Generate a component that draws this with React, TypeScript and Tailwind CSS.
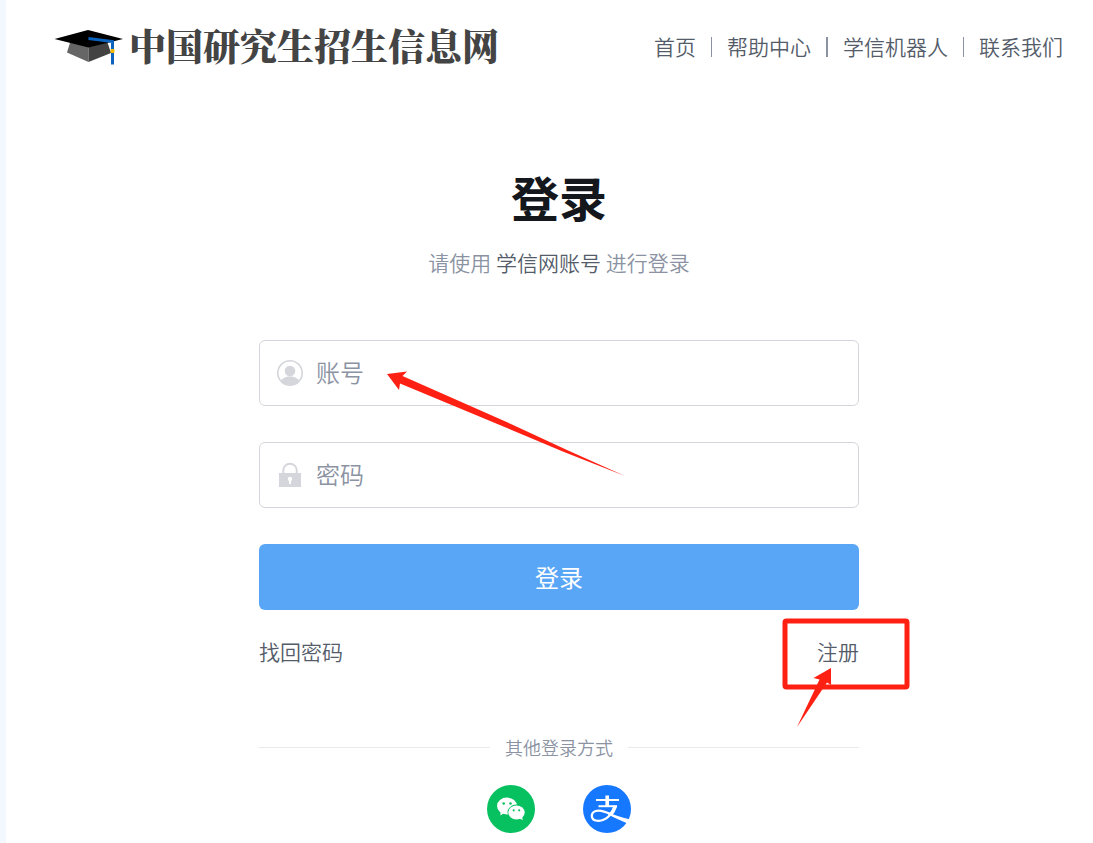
import React from 'react'

interface NavItem {
  label: string
  href: string
  divider?: string
}

const navItems: NavItem[] = [
  { label: '首页', href: '#home' },
  { label: '帮助中心', href: '#help', divider: 'w-px' },
  { label: '学信机器人', href: '#robot', divider: 'w-0.5' },
  { label: '联系我们', href: '#contact', divider: 'w-px' },
]

const CapLogo = () => (
  <svg viewBox="0 0 70 36" className="h-9 w-[70px] shrink-0" aria-hidden="true">
    <path d="M16.500 12 13 23.500 34.500 33V17Z" fill="#666" />
    <path d="M34.500 17V33L57 24 53 12Z" fill="#424242" />
    <path d="M0.500 10 34 1 69 10 34.500 18.500Z" fill="#000" />
    <path d="M34.500 9.500 58.500 12.500V35.500" fill="none" stroke="#0b63be" strokeWidth="3" />
    <rect x="56.500" y="20" width="4" height="4" rx="1" fill="#f5b800" />
  </svg>
)

const UserIcon = () => (
  <svg viewBox="0 0 26 26" className="size-[26px] shrink-0" aria-hidden="true">
    <defs>
      <clipPath id="user-clip">
        <circle cx="13" cy="13" r="12" />
      </clipPath>
    </defs>
    <circle cx="13" cy="13" r="12.200" fill="none" stroke="#d5d6db" strokeWidth="1.600" />
    <g clipPath="url(#user-clip)" fill="#d5d6db">
      <circle cx="13" cy="11" r="5.300" />
      <path d="M3.500 21.500c2-3.500 4.500-4.500 7.500-5h4c3 .5 5.500 1.500 7.500 5v5h-19Z" />
    </g>
  </svg>
)

const LockIcon = () => (
  <svg viewBox="0 0 26 26" className="size-[26px] shrink-0" aria-hidden="true">
    <path d="M6.300 12V8a6.700 6.200 0 0 1 13.400 0V12" fill="none" stroke="#d5d6db" strokeWidth="1.900" />
    <rect x="2" y="11" width="22" height="14" fill="#d5d6db" />
    <circle cx="13" cy="17" r="2.200" fill="#fff" />
    <rect x="12" y="17" width="2" height="5" fill="#fff" />
  </svg>
)

const WechatIcon = () => (
  <svg viewBox="0 0 48 48" className="size-12" aria-hidden="true">
    <circle cx="24" cy="24" r="24" fill="#07c160" />
    <path d="M13.500 24 13.500 30.500 18.500 27Z" fill="#fff" />
    <ellipse cx="20" cy="21" rx="10" ry="8.400" fill="#fff" />
    <ellipse cx="29.500" cy="27.500" rx="9" ry="7.900" fill="#07c160" />
    <ellipse cx="29.500" cy="27.500" rx="8.200" ry="7.100" fill="#fff" />
    <path d="M31 33 35.800 35 34.800 31Z" fill="#fff" />
    <g fill="#07c160">
      <circle cx="16.700" cy="18.500" r="1.300" />
      <circle cx="23.500" cy="18.500" r="1.300" />
      <circle cx="26.700" cy="25.300" r="1.100" />
      <circle cx="32.200" cy="25.300" r="1.100" />
    </g>
  </svg>
)

const AlipayIcon = () => (
  <svg viewBox="0 0 48 48" className="size-12" aria-hidden="true">
    <circle cx="24" cy="24" r="24" fill="#1677ff" />
    <g fill="none" stroke="#fff">
      <path d="M13 15H36" strokeWidth="2" />
      <path d="M15.500 21.200H34" strokeWidth="2" />
      <path d="M24.200 10.500V21" strokeWidth="3.600" />
      <path d="M32 21C29.500 28 24 35.800 15.500 35.800 11 35.800 8.800 33.500 8.800 30.700 8.800 27.800 11.500 25.700 15.500 25.700 20 25.700 24 27.500 28 29.500" strokeWidth="2.300" />
      <path d="M32.200 21.500C31.200 24.500 29.500 27.500 27.500 30" strokeWidth="3.600" />
    </g>
    <path d="M25 27C31 30 38 32.500 46.500 34.200L44 38.200C38 36 32 33 25 29.600Z" fill="#fff" />
  </svg>
)

interface FieldProps {
  id: string
  label: string
  type: string
  icon: React.ReactNode
}

const Field: React.FC<FieldProps> = ({ id, label, type, icon }) => (
  <div className="flex h-[66px] items-center gap-[13px] rounded-md border border-[#d5d6db] bg-white px-[17px]">
    <label htmlFor={id} aria-label={label}>
      {icon}
    </label>
    <input
      id={id}
      type={type}
      placeholder={label}
      className="h-full min-w-0 flex-1 bg-transparent pb-1 text-2xl font-[350] text-[#545c6a] outline-none placeholder:text-[#8b93a3]"
    />
  </div>
)

export default function App() {
  return (
    <div className="min-h-screen border-l-6 border-[#f3f8ff] bg-white pb-[10px] font-['Noto_Sans_CJK_SC','Liberation_Sans',sans-serif] text-[#545c6a]">
      <header className="flex h-24 items-center justify-between pr-[30px] pb-0.5 pl-12">
        <a href="#home" className="flex items-center gap-[5px] whitespace-nowrap">
          <CapLogo />
          <span className="pb-1 font-['Noto_Serif_CJK_SC','Noto_Sans_CJK_SC',serif] text-[37px] leading-9 font-black text-[#444]">
            中国研究生招生信息网
          </span>
        </a>
        <nav className="flex items-center gap-[15px] text-[21px] font-[350] whitespace-nowrap">
          {navItems.map((item) => (
            <React.Fragment key={item.label}>
              {item.divider && <span className={`h-5 bg-[#8b93a3] ${item.divider}`} />}
              <a href={item.href}>{item.label}</a>
            </React.Fragment>
          ))}
        </nav>
      </header>

      <main className="pl-[19px]">
        <div className="relative mx-auto max-w-[600px] pt-16">
          <h1 className="text-center text-5xl leading-[72px] font-bold text-[#14171c]">登录</h1>
          <p className="mt-3.5 text-center text-[21px] leading-8 font-[350] text-[#8b93a3]">
            请使用 <a href="#account" className="text-[#545c6a]">学信网账号</a> 进行登录
          </p>

          <form className="mt-[62px] flex flex-col gap-9" onSubmit={(e) => e.preventDefault()}>
            <Field id="account" label="账号" type="text" icon={<UserIcon />} />
            <Field id="password" label="密码" type="password" icon={<LockIcon />} />
            <button type="submit" className="h-[66px] rounded-md bg-[#5aa6f6] text-2xl text-white">
              登录
            </button>
          </form>

          <div className="mt-[25px] flex justify-between text-[21px] leading-8 font-[350]">
            <a href="#forgot">找回密码</a>
            <span className="relative">
              <a href="#register">注册</a>
              {/* Highlight around the register link */}
              <svg
                viewBox="0 0 128 112"
                className="pointer-events-none absolute -top-[19px] -right-[51px] h-28 w-32 max-w-none"
                aria-hidden="true"
              >
                <rect x="3" y="5" width="122" height="66" rx="1.500" fill="none" stroke="#ff2014" strokeWidth="5" strokeLinejoin="round" />
                <path d="M49 52 31.500 62 37.500 63.500 15 111 45 66.500 49 69Z" fill="#ff2014" />
              </svg>
            </span>
          </div>

          <div className="mt-[66px] flex items-center gap-[15px] text-lg leading-7 font-[350] text-[#8b93a3]">
            <span className="h-px flex-1 bg-[#e8e9eb]" />
            其他登录方式
            <span className="h-px flex-1 bg-[#e8e9eb]" />
          </div>

          <div className="mt-6 flex justify-center gap-12">
            <button type="button" aria-label="微信登录">
              <WechatIcon />
            </button>
            <button type="button" aria-label="支付宝登录">
              <AlipayIcon />
            </button>
          </div>

          {/* Arrow pointing at the account field */}
          <svg
            viewBox="0 0 240 110"
            className="pointer-events-none absolute top-[274px] left-32 h-[110px] w-60"
            aria-hidden="true"
          >
            <path d="M0 6 20 3.500 15.500 8 125 56.500 180 82 238 108 177 84 120 60 13 15.500 12 22Z" transform="translate(0 -2)" fill="#ff2014" />
          </svg>
        </div>
      </main>
    </div>
  )
}
